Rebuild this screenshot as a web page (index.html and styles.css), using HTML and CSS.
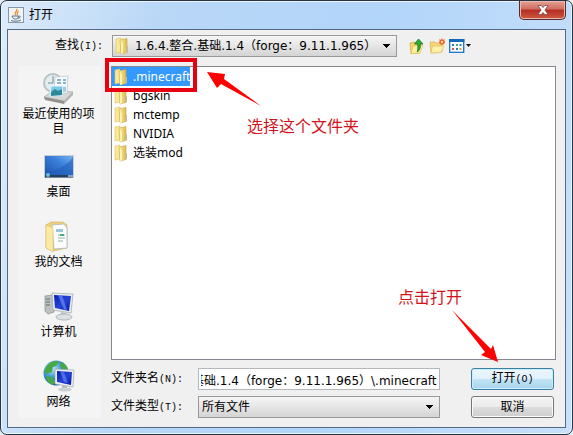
FILE: index.html
```html
<!DOCTYPE html>
<html lang="zh-CN">
<head>
<meta charset="utf-8">
<title>打开</title>
<meta name="viewport" content="width=device-width, initial-scale=1">
<link rel="stylesheet" href="styles.css">
</head>
<body>
<svg class="defs" aria-hidden="true">
  <defs>
    <linearGradient id="fold" x1="0" x2="1"><stop offset="0" stop-color="#fbf0a8"/><stop offset="1" stop-color="#dfb848"/></linearGradient>
    <linearGradient id="screen" x1="0" y1="0" x2="1" y2="1"><stop offset="0" stop-color="#0a1fa8"/><stop offset=".5" stop-color="#2444d8"/><stop offset="1" stop-color="#0718a0"/></linearGradient>
    <linearGradient id="desk" x1="0" y1="1" x2="1" y2="0"><stop offset="0" stop-color="#1c4ca4"/><stop offset=".6" stop-color="#3a80dc"/><stop offset="1" stop-color="#78b4f0"/></linearGradient>
    <radialGradient id="globe" cx=".35" cy=".3" r=".8"><stop offset="0" stop-color="#c4ecfa"/><stop offset=".5" stop-color="#3090d0"/><stop offset="1" stop-color="#104a90"/></radialGradient>
    <symbol id="folder" viewBox="0 0 16 18">
      <path d="M2 2 7 1v14l-5 1z" fill="#f8e898" stroke="#dcc068" stroke-width=".6"/>
      <path d="M6 3 13 1.500v14L7 17z" fill="url(#fold)" stroke="#cfaa48" stroke-width=".6"/>
      <path d="M9 7v9l-2 1V4z" fill="#fff3b0"/>
      <path d="M12 9h2v6l-2 1z" fill="#c8bc8c"/>
    </symbol>
  </defs>
</svg>
<main class="window">
  <header class="titlebar">
    <svg class="java" viewBox="0 0 16 16" aria-hidden="true"><rect x=".5" y=".5" width="15" height="15" fill="#f1f3f4" stroke="#8797a8"/><path d="M8.500 2c2 2-3 3-1 6M10 4c1 1-2 2-.5 4" fill="none" stroke="#e58a24" stroke-width="1.300"/><path d="M4 9h6.500c0 2-1 3-3 3s-3-1-3.500-3M10.500 9.200c3-.5 2 2-.7 2M3 13.500c3 1 7 1 10-.5" fill="none" stroke="#55718f"/></svg>
    <h1 class="title">打开</h1>
    <button class="close" aria-label="关闭"><svg viewBox="0 0 12 10"><path d="M1 .5h3.200L6 2.600 7.800.5H11L7.900 5 11 9.500H7.800L6 7.400 4.200 9.500H1L4.100 5z" fill="#fff" stroke="#6c4444" stroke-width=".7"/></svg></button>
  </header>
  <form class="client">
    <div class="toolbar">
      <label class="look" for="dir">查找<span class="key">(I):</span></label>
      <div class="dir">
        <svg class="folder dir-icon" aria-hidden="true"><use href="#folder"/></svg>
        <select id="dir" class="combo has-icon"><option>1.6.4.整合.基础.1.4（forge：9.11.1.965）</option></select>
      </div>
      <div class="tools">
        <button type="button" class="tool" aria-label="向上一级"><svg viewBox="0 0 16 16"><path d="M1 5l5-1 1 1h5l-1 10-9 .5z" fill="#f6d66c" stroke="#d5a83c" stroke-width=".7"/><path d="M4 8l10-1-3 8-9 .5z" fill="#fff0a0" stroke="#dfb94a" stroke-width=".6"/><path d="M9.500 1 14 6h-2.600c.2 4-.4 6-3.200 8C9 11 9 9 8.600 6H5.500z" fill="#35a83b" stroke="#137c26" stroke-width=".8"/></svg></button>
        <button type="button" class="tool" aria-label="新建文件夹"><svg viewBox="0 0 16 16"><path d="M1 4h5l1 1h6v9l-11 1z" fill="#f6d878" stroke="#dcae48" stroke-width=".7"/><path d="M3.500 8H15l-3 6.500-10 .5z" fill="#fff1ac" stroke="#e3bd55" stroke-width=".7"/><circle cx="13" cy="4" r="2" fill="#ffd9a0" stroke="#f0642c" stroke-width="1.600"/><path d="M13 .5v1M16 4h-1M10.500 1.500l1 1M15.500 1.500l-1 1" stroke="#f0642c"/></svg></button>
        <button type="button" class="tool view" aria-label="查看"><svg viewBox="0 0 22 16"><rect x=".7" y="1.700" width="14" height="12.600" fill="#fff" stroke="#1674c8" stroke-width="1.300"/><path d="M0 1h15.400v3H0z" fill="#1469b8"/><g fill="#3b78c4"><path d="M3 6h2v2H3zM10.500 6h2v2h-2z"/><path d="M7 10h2v2H7z"/></g><path d="M7 6h2v2H7z" fill="#4aa86a"/><path d="M3 10h2v2H3z" fill="#c05c54"/><path d="M10.500 10h2v2h-2z" fill="#d3a24a"/><path d="M17 6h5l-2.500 3z" fill="#111"/></svg></button>
      </div>
    </div>
    <div class="body">
      <nav class="places">
        <a class="place" href="#recent">
          <svg viewBox="0 0 32 32"><path d="M1 25 10 19l20 1-9 9z" fill="#d5d8d9" stroke="#a5a8aa" stroke-width=".8"/><path d="M1 25l20 4v3L2 28z" fill="#96908c"/><path d="M21 29l9-9v3l-9 9z" fill="#b9b4b0"/><circle cx="10" cy="11" r="9" fill="#e3edf0" stroke="#bac3c5" stroke-width="2"/><path d="M10 4v7H5" fill="none" stroke="#72909a"/><path d="M12 5l13-1-1 17-13 2z" fill="#f9fcfd" stroke="#b4c3cb" stroke-width=".7"/><path d="M14 8h4M20 8h3M14 11h4M20 11h3" stroke="#649cc2" stroke-width="1.300"/><path d="M8 14l12 0-1 9-12 1z" fill="#7dc8e8" stroke="#e9f6fc"/><path d="M8 20l4-3 3 2 4-2v6l-11 1z" fill="#2d8898"/><path d="M20 15l3-.5v5l-3 1z" fill="#a3cce2"/></svg>
          <span>最近使用的项目</span></a>
        <a class="place" href="#desktop">
          <svg viewBox="0 0 32 32"><rect x="1.500" y="5.500" width="29" height="22" fill="url(#desk)" stroke="#c6ccd4"/><path d="M2 22C12 21 24 16 30 7v18H2z" fill="#205bb8" opacity=".55"/><path d="M2 25h28v2.500H2z" fill="#263f60"/><path d="M25 25h5v2h-5z" fill="#87a5bd"/><circle cx="5" cy="25" r="2" fill="#69bcd4"/></svg>
          <span>桌面</span></a>
        <a class="place" href="#documents">
          <svg viewBox="0 0 32 32"><path d="M3 5l5-3h12l4 3v23l-14 3-7-3z" fill="#ecd078" stroke="#d1b05e" stroke-width=".6"/><path d="M9 5l12-1 3 4v20l-13 1z" fill="#fbfdfe" stroke="#a4b3bb" stroke-width=".7"/><path d="M13 9h7v3h-7z" fill="#9ac6da"/><path d="M15 15h7M15 18h7M15 21h5" stroke="#8db4a2"/><path d="M17 14h4v2h-4z" fill="#48a888"/><path d="M3 5l7 3v24l-7-4z" fill="#fce9a4" stroke="#e0c06d" stroke-width=".6"/></svg>
          <span>我的文档</span></a>
        <a class="place" href="#computer">
          <svg viewBox="0 0 32 32"><path d="M2 6l7-1 2 1v16l-6 2-3-3z" fill="#bcc2c4" stroke="#858c90" stroke-width=".7"/><path d="M3 9h4M3 12h4M3 15h4" stroke="#60686c"/><path d="M9 3l21 1-2 19-18-3z" fill="#e9edf0" stroke="#9ba4aa" stroke-width=".7"/><path d="M11 5l17 1-2 15-14-3z" fill="url(#screen)"/><path d="M15 5h4l5 15-3-.5z" fill="#6c8cf4" opacity=".7"/><path d="M18 22l5 1v3h-5z" fill="#b6bfc4"/><ellipse cx="21" cy="27" rx="8" ry="3" fill="#dce1e3" stroke="#b0b8bc"/></svg>
          <span>计算机</span></a>
        <a class="place" href="#network">
          <svg viewBox="0 0 32 32"><circle cx="13" cy="13" r="12.500" fill="url(#globe)"/><path d="M3 7C7 1 13 0 16 2l-3 4-3 1-1 5-5 2-3-2zM18 2c4 1 7 5 7 8l-6-1-2-3zM3 16l6 1 3 5-2 3c-4-1-7-5-7-9z" fill="#48a848"/><path d="M12 9l19 1-1 17-18-3z" fill="#eef1f3" stroke="#9ca6ac" stroke-width=".7"/><path d="M14 11l15 1-1 13-14-3z" fill="url(#screen)"/><path d="M17 11l4 1 4 11-4-1z" fill="#6988f0" opacity=".65"/><path d="M19 25l5 1v3h-5z" fill="#b3bcc0"/><ellipse cx="22" cy="29.500" rx="7" ry="2" fill="#cbd1d3"/></svg>
          <span>网络</span></a>
      </nav>
      <div class="content">
        <div class="files">
          <ul class="list">
            <li class="file selected"><svg class="folder"><use href="#folder"/></svg><span>.minecraft</span></li>
            <li class="file"><svg class="folder"><use href="#folder"/></svg><span>bgskin</span></li>
            <li class="file"><svg class="folder"><use href="#folder"/></svg><span>mctemp</span></li>
            <li class="file"><svg class="folder"><use href="#folder"/></svg><span>NVIDIA</span></li>
            <li class="file"><svg class="folder"><use href="#folder"/></svg><span>选装mod</span></li>
          </ul>
          <div class="frame"></div>
          <svg class="arrow arrow-folder" viewBox="0 0 56 36"><path d="M1 1 19 3 18 8 55 35 15 13 11 17z" fill="#f00"/></svg>
          <p class="note note-folder">选择这个文件夹</p>
          <p class="note note-open">点击打开</p>
          <svg class="arrow arrow-open" viewBox="0 0 48 54"><path d="M1 1 40 40 42 36 47 53 30 46 34 43z" fill="#f00"/></svg>
        </div>
        <div class="fields">
          <label for="name">文件夹名<span class="key">(N):</span></label>
          <input id="name" class="name" value="基础.1.4（forge：9.11.1.965）\.minecraft">
          <button type="button" class="btn primary">打开<span class="key">(O)</span></button>
          <label for="type">文件类型<span class="key">(T):</span></label>
          <select id="type" class="combo"><option>所有文件</option></select>
          <button type="button" class="btn">取消</button>
        </div>
      </div>
    </div>
  </form>
</main>
<script>
  // Keep the end of the path in view.
  const field = document.getElementById("name");
  field.scrollLeft = field.scrollWidth;
</script>
</body>
</html>
```
FILE: styles.css
```css
* { box-sizing: border-box; }
body {
  margin: 0;
  background: #e4edf2;
  color: #000;
  font: 12px/16px "Liberation Sans", "Noto Sans CJK SC", sans-serif;
}
button, input, select { font: inherit; color: inherit; margin: 0; }
.defs { position: absolute; width: 0; height: 0; }
.window {
  min-height: 100vh;
  display: flex;
  flex-direction: column;
  padding: 0 6px 6px;
  border: 1px solid #273445;
  border-radius: 7px;
  background: linear-gradient(100deg, #dcebfa 0, #b9d7f7 25%, #b2d5fa 60%, #c8e0fa 100%);
  box-shadow: inset 0 0 0 1px #e9f5ff;
}
.titlebar { display: flex; align-items: center; height: 28px; padding-left: 1px; }
.java { width: 16px; height: 16px; }
.title { flex: 1; margin: 0 0 0 5px; font-size: 12px; font-weight: 400; }
.close {
  align-self: flex-start;
  width: 47px;
  height: 19px;
  padding: 0;
  display: grid;
  place-items: center;
  border: 1px solid #542b30;
  border-top: 0;
  border-radius: 0 0 5px 5px;
  background: linear-gradient(#e4a294 0, #cf6d60 45%, #b52c22 50%, #cf5a42 100%);
  box-shadow: inset 0 0 0 1px #eab9ad;
}
.close svg { width: 12px; height: 10px; }
.client {
  flex: 1;
  display: flex;
  flex-direction: column;
  border: 1px solid #526a86;
  background: #f0f0f0;
  padding: 5px 9px 9px 10px;
}
.toolbar { display: flex; align-items: center; height: 22px; margin-bottom: 9px; }
.look { width: 94px; padding-left: 37px; }
.key { font-family: "Liberation Mono", monospace; font-size: 10px; }
.dir { position: relative; width: 285px; }
.folder { flex: none; width: 16px; height: 18px; }
.dir-icon { position: absolute; left: 2px; top: 2px; pointer-events: none; }
.combo {
  width: 100%;
  height: 22px;
  padding: 0 20px 0 3px;
  appearance: none;
  border: 1px solid #999;
  border-radius: 0;
  background:
    linear-gradient(225deg, #000 50%, transparent 0) right 9px center / 4px 4px no-repeat,
    linear-gradient(135deg, #000 50%, transparent 0) right 5px center / 4px 4px no-repeat,
    linear-gradient(#f6f6f6, #e6e6e6 48%, #d4d4d4);
}
.combo.has-icon, .name { font-family: "DejaVu Sans", "Noto Sans CJK SC", sans-serif; }
.has-icon { padding-left: 22px; }
.tools { display: flex; gap: 4px; padding-left: 12px; }
.tool { width: 16px; height: 16px; padding: 0; border: 0; background: none; display: block; }
.tool svg { display: block; width: 100%; height: 16px; }
.view { width: 22px; }
.body { flex: 1; display: flex; gap: 10px; }
.places {
  width: 83px;
  flex: none;
  padding: 6px 3px 0 1px;
  background: #f4f4f4;
}
.place {
  display: flex;
  flex-direction: column;
  align-items: center;
  gap: 3px;
  min-height: 70px;
  padding-bottom: 13px;
  color: inherit;
  text-align: center;
  text-decoration: none;
  line-height: 15px;
}
.place:last-child { min-height: 0; padding-bottom: 0; }
.place svg { width: 32px; height: 32px; }
.content { flex: 1; min-width: 0; display: flex; flex-direction: column; }
.files { position: relative; flex: 1; border: 1px solid #828790; background: #fff; }
.list { margin: 0; padding: 0; list-style: none; }
.file {
  display: flex;
  align-items: center;
  gap: 4px;
  width: max-content;
  height: 19px;
  padding-left: 1px;
  font: 12px/19px "Noto Sans", "Noto Sans CJK SC", sans-serif;
}
.selected { background: #3399ff; color: #fff; }
.frame { position: absolute; left: -7px; top: -9px; width: 92px; height: 34px; border: 4px solid #e60012; }
.arrow { position: absolute; }
.arrow-folder { left: 94px; top: 4px; width: 56px; height: 36px; }
.arrow-open { right: 56px; bottom: -4px; width: 48px; height: 54px; }
.note { position: absolute; margin: 0; font-size: 16px; line-height: 20px; color: #d4141c; white-space: nowrap; }
.note-folder { left: 135px; top: 50px; }
.note-open { right: 93px; bottom: 51px; }
.fields {
  display: grid;
  grid-template-columns: 87px minmax(0, 1fr) 83px;
  align-items: center;
  row-gap: 6px;
  padding: 8px 2px 0 0;
}
.fields .combo, .name { width: calc(100% - 31px); }
.name { height: 22px; padding: 0 2px; border: 1px solid #b4b8bc; background: #fff; outline: 0; }
.btn {
  height: 22px;
  padding: 0;
  border: 1px solid #777;
  border-radius: 3px;
  background: linear-gradient(#f4f4f4, #ebebeb 48%, #dcdcdc 52%, #cfcfcf);
  box-shadow: inset 0 0 0 1px #fafafa;
}
.primary {
  border-color: #3c7fa5;
  background: linear-gradient(#eef7fc, #dff1fb 48%, #c2e3f5 52%, #a8d5ee);
  box-shadow: inset 0 0 0 1px #c7effb;
}
```
